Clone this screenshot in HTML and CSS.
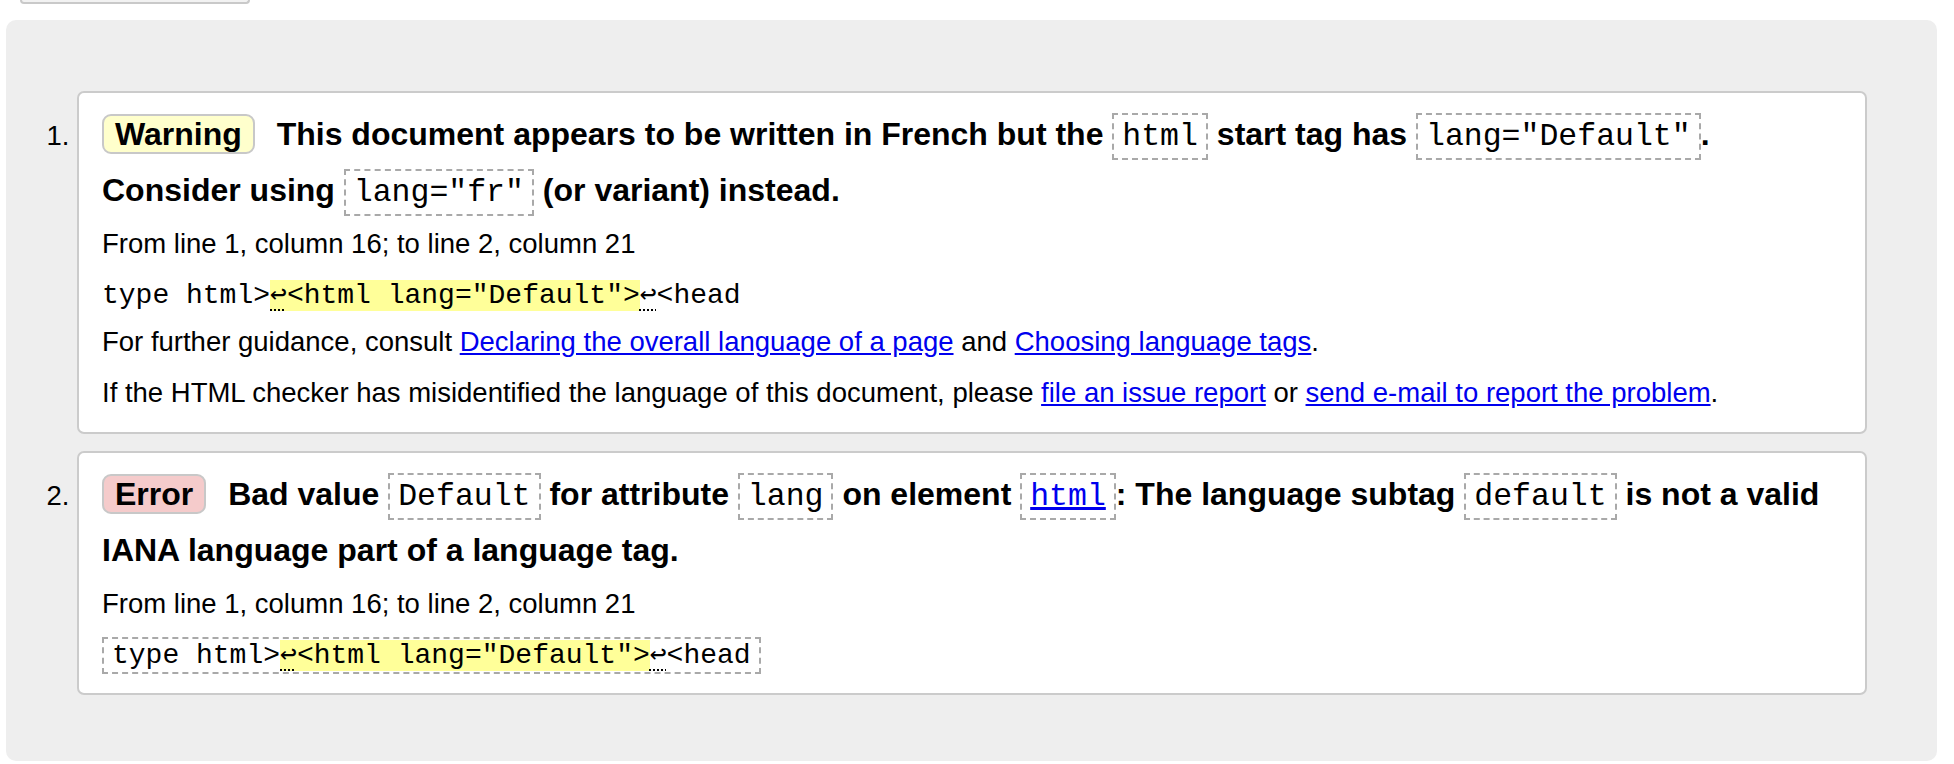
FILE: index.html
```html
<!DOCTYPE html>
<html lang="en">
<head>
<meta charset="utf-8">
<title>Validation messages</title>
<link rel="stylesheet" href="styles.css">
</head>
<body>
<div class="top-btn"></div>
<div class="results">
  <ol class="messages">
    <li class="msg">
      <p class="title"><strong class="badge badge-warning">Warning</strong> <span>This document appears to be written in French but the <code class="c">html</code> start tag has <code class="c">lang="Default"</code>. Consider using <code class="c">lang="fr"</code> (or variant) instead.</span></p>
      <p class="loc">From line 1, column 16; to line 2, column 21</p>
      <p class="extract"><code class="x">type html&gt;<mark><span class="lf">&#x21A9;</span>&lt;html lang="Default"&gt;</mark><span class="lf">&#x21A9;</span>&lt;head</code></p>
      <p class="info">For further guidance, consult <a href="#">Declaring the overall language of a page</a> and <a href="#">Choosing language tags</a>.</p>
      <p class="info">If the HTML checker has misidentified the language of this document, please <a href="#">file an issue report</a> or <a href="#">send e-mail to report the problem</a>.</p>
    </li>
    <li class="msg">
      <p class="title"><strong class="badge badge-error">Error</strong> <span>Bad value <code class="c">Default</code> for attribute <code class="c">lang</code> on element <code class="c"><a href="#">html</a></code>: The language subtag <code class="c">default</code> is not a valid IANA language part of a language tag.</span></p>
      <p class="loc">From line 1, column 16; to line 2, column 21</p>
      <p class="extract"><code class="x x-box">type html&gt;<mark><span class="lf">&#x21A9;</span>&lt;html lang="Default"&gt;</mark><span class="lf">&#x21A9;</span>&lt;head</code></p>
    </li>
  </ol>
</div>
</body>
</html>
```

FILE: styles.css
```css
* {
  box-sizing: border-box;
}

html,
body {
  margin: 0;
  background: #fff;
}

body {
  font-family: "Liberation Sans", Arial, Helvetica, sans-serif;
  font-size: 27.5px;
  color: #000;
}

.top-btn {
  width: 230px;
  height: 4px;
  margin-left: 20px;
  background: #f2f2f2;
  border: 2px solid #c9c9c9;
  border-top: 0;
  border-radius: 0 0 8px 8px;
}

.results {
  margin: 16px 17px 0 6px;
  background: #eeeeee;
  border-radius: 10px;
  padding: 71px 70px 66px 71px;
}

.messages {
  margin: 0;
  padding: 0;
  list-style: decimal outside;
}

.msg {
  background: #fff;
  border: 2px solid #cbcbcb;
  border-radius: 7px;
  padding: 13px 23px 22px 23px;
  margin-bottom: 17px;
}

.msg:last-child {
  margin-bottom: 0;
  padding-bottom: 19px;
}

.msg p {
  margin: 15px 0 0;
  line-height: 34px;
}

.msg p.title {
  margin: 0;
  font-size: 32px;
  font-weight: bold;
  line-height: 56px;
}

.msg p.loc {
  margin-top: 9px;
}

.msg p.extract {
  margin-top: 16px;
}

.msg p.extract + p.info {
  margin-top: 12px;
}

.msg p.info + p.info {
  margin-top: 17px;
}

.badge {
  display: inline-block;
  padding: 0 11px;
  border: 2px solid #c8c8c8;
  border-radius: 9px;
  line-height: 36px;
  margin-right: 13px;
  font-weight: bold;
}

.badge-warning {
  background: #ffffcc;
}

.badge-error {
  background: #f5cbcb;
}

.c {
  font-family: "Liberation Mono", "Courier New", monospace;
  font-size: 31.5px;
  font-weight: normal;
  border: 2px dashed #a9a9a9;
  padding: 4px 8px;
  line-height: 1;
}

.x {
  font-family: "Liberation Mono", "Courier New", "DejaVu Sans Mono", monospace;
  font-size: 28px;
}

.x-box {
  display: inline-block;
  line-height: 31px;
  padding: 1px 8px;
  border: 2px dashed #a9a9a9;
}

mark {
  background: #ffff99;
  color: inherit;
}

.lf {
  text-decoration: underline dotted;
  text-decoration-thickness: 2px;
  text-underline-offset: 6px;
}

a {
  color: #0000ee;
  text-decoration: underline;
}
```
